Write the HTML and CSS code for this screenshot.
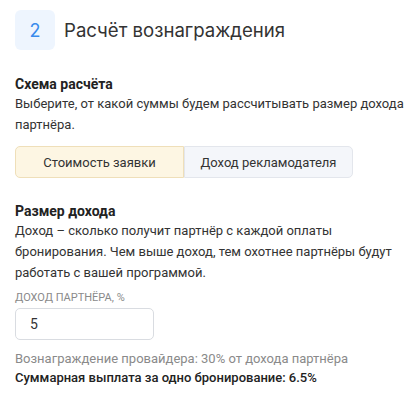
FILE: index.html
```html
<!DOCTYPE html>
<html lang="ru">
<head>
  <meta charset="UTF-8" />
  <meta name="viewport" content="width=device-width, initial-scale=1.0"/>
  <title>Расчёт вознаграждения</title>
  <link rel="stylesheet" href="styles.css">
</head>
<body>
  <div class="step">
    <div class="step-head">
      <div class="step-num">2</div>
      <h1>Расчёт вознаграждения</h1>
    </div>

    <div class="block">
      <h2>Схема расчёта</h2>
      <p>Выберите, от какой суммы будем рассчитывать размер дохода партнёра.</p>
      <div class="switch">
        <button class="active">Стоимость заявки</button>
        <button>Доход рекламодателя</button>
      </div>
    </div>

    <div class="block income">
      <h2>Размер дохода</h2>
      <p>Доход – сколько получит партнёр с каждой оплаты бронирования. Чем выше доход, тем охотнее партнёры будут работать с вашей программой.</p>
      <label class="field-label" for="share">Доход партнёра, %</label>
      <input id="share" class="field" type="text" value="5">
      <div class="note">Вознаграждение провайдера: 30% от дохода партнёра</div>
      <div class="total">Суммарная выплата за одно бронирование: 6.5%</div>
    </div>
  </div>
</body>
</html>
```

FILE: styles.css
```css
body { font-family: Roboto, "Liberation Sans", sans-serif; background: #fff; color: #333; margin: 0; padding: 0; }
.step { padding: 10px 4px 10px 15px; }
.step-head { display: flex; align-items: center; gap: 9px; }
.step-num { width: 40px; height: 40px; border-radius: 6px; background: #eef5fe; color: #3a8bec; font-family: Inter, sans-serif; font-size: 18px; display: flex; align-items: center; justify-content: center; }
h1 { font-family: Inter, sans-serif; font-weight: 400; font-size: 18.6px; margin: 0; color: #333; }
.block { margin-top: 25px; }
.block.income { margin-top: 24px; }
h2 { font-size: 14px; line-height: 18px; font-weight: 700; margin: 0; color: #222; }
p { font-size: 13px; line-height: 21px; margin: 0; color: #333; }
.switch { display: flex; width: 338px; margin-top: 11px; }
.switch button { flex: 1; height: 32px; font-family: inherit; font-size: 13px; color: #333; background: #f4f6fa; border: 1px solid #e3e6ec; border-radius: 0 5px 5px 0; cursor: pointer; padding: 0; }
.switch button.active { background: #fdf6e3; border-color: #efdfb9; border-radius: 5px 0 0 5px; }
.field-label { display: block; margin-top: 7px; font-size: 11px; line-height: 16px; text-transform: uppercase; color: #8a8a8a; }
.field { display: block; box-sizing: border-box; width: 139px; height: 32px; margin-top: 2px; padding: 0 14px; border: 1px solid #d9dce1; border-radius: 5px; font-family: inherit; font-size: 14px; color: #333; }
.note { margin-top: 9px; font-size: 13px; line-height: 19px; color: #8a8a8a; }
.total { font-size: 13px; line-height: 19px; font-weight: 500; color: #222; }
```
